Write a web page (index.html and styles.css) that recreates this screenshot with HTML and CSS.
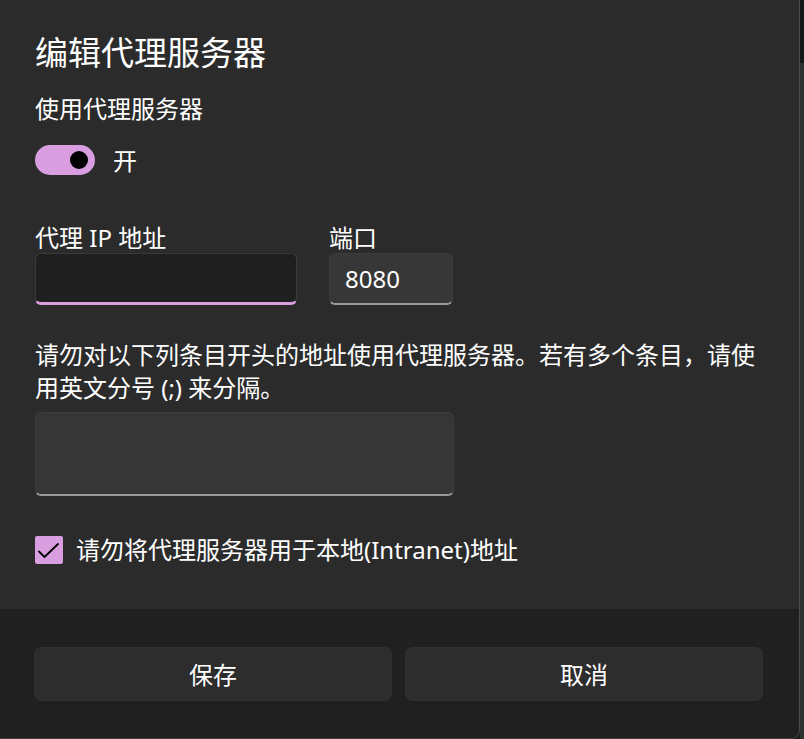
FILE: index.html
```html
<!DOCTYPE html>
<html lang="zh-CN">
<head>
<meta charset="utf-8">
<title>编辑代理服务器</title>
<link rel="stylesheet" href="styles.css">
</head>
<body>
<div class="page">
  <div class="dialog">
    <div class="content">
      <h1 class="title">编辑代理服务器</h1>
      <div class="label use-label">使用代理服务器</div>
      <div class="toggle-row">
        <span class="toggle"><span class="knob"></span></span>
        <span class="toggle-text">开</span>
      </div>
      <div class="fields">
        <div class="field ip">
          <div class="label field-label">代理 IP 地址</div>
          <div class="input input-focused"></div>
        </div>
        <div class="field port">
          <div class="label field-label">端口</div>
          <div class="input input-filled">8080</div>
        </div>
      </div>
      <p class="desc">请勿对以下列条目开头的地址使用代理服务器。若有多个条目，请使用英文分号 (;) 来分隔。</p>
      <div class="textarea"></div>
      <div class="check-row">
        <span class="checkbox">
          <svg width="28" height="28" viewBox="0 0 28 28"><polyline points="4,15.5 9.5,21 23,8" fill="none" stroke="#000" stroke-width="1.8" stroke-linecap="round" stroke-linejoin="round"/></svg>
        </span>
        <span class="check-text">请勿将代理服务器用于本地(Intranet)地址</span>
      </div>
    </div>
    <div class="footer">
      <button class="btn">保存</button>
      <button class="btn">取消</button>
    </div>
  </div>
  <div class="backdrop"><div class="backdrop-top"></div></div>
</div>
</body>
</html>
```
FILE: styles.css
```css
* { box-sizing: border-box; }
html, body {
  margin: 0;
  padding: 0;
  background: #1c201f;
}
body {
  font-family: "Noto Sans", "Noto Sans CJK SC", sans-serif;
  color: #ffffff;
}
.page {
  display: flex;
  width: 804px;
  height: 739px;
  overflow: hidden;
}
.dialog {
  width: 800px;
  height: 739px;
  flex: none;
  display: flex;
  flex-direction: column;
  background: #2b2b2b;
  border-right: 1px solid #4a4d4c;
  border-bottom: 1px solid #3e4241;
  border-bottom-right-radius: 9px;
  overflow: hidden;
}
.backdrop {
  flex: 1;
  background: #2e3231;
}
.backdrop-top {
  height: 63px;
  background: #141816;
}
.content {
  flex: 1;
  padding: 33px 0 0 35px;
}
.title {
  margin: 0;
  font-size: 33px;
  font-weight: 400;
  line-height: 40px;
  height: 40px;
  letter-spacing: 0;
}
.label {
  font-size: 24px;
  line-height: 32px;
}
.use-label {
  margin-top: 20px;
}
.toggle-row {
  margin-top: 20px;
  height: 30px;
  display: flex;
  align-items: center;
}
.toggle {
  width: 60px;
  height: 30px;
  border-radius: 15px;
  background: #d99ee0;
  display: flex;
  align-items: center;
  justify-content: flex-end;
  padding-right: 7px;
}
.knob {
  width: 18px;
  height: 18px;
  border-radius: 50%;
  background: #000;
}
.toggle-text {
  margin-left: 18px;
  font-size: 24px;
  line-height: 30px;
  padding-top: 2px;
}
.fields {
  margin-top: 48px;
  display: flex;
  gap: 32px;
}
.field-label {
  line-height: 30px;
  height: 30px;
}
.ip .input { width: 262px; }
.port .input { width: 124px; }
.input {
  height: 52px;
  border-radius: 6px;
  font-size: 24px;
  line-height: 50px;
  padding-left: 15px;
}
.input-focused {
  background: #1f1f1f;
  border: 1px solid #3a3a3a;
  border-bottom: 3px solid #d99ee0;
}
.input-filled {
  background: #373737;
  border: 1px solid #3d3d3d;
  border-bottom: 2px solid #9a9a9a;
}
.desc {
  margin: 33px 0 0;
  width: 740px;
  font-size: 24px;
  line-height: 33px;
}
.textarea {
  margin-top: 8px;
  width: 419px;
  height: 84px;
  border-radius: 6px;
  background: #363636;
  border: 1px solid #3d3d3d;
  border-bottom: 2px solid #9a9a9a;
}
.check-row {
  margin-top: 40px;
  display: flex;
  align-items: center;
  height: 28px;
}
.checkbox {
  width: 28px;
  height: 28px;
  background: #d99ee0;
  border-radius: 2px;
  display: block;
}
.checkbox svg { display: block; }
.check-text {
  margin-left: 13px;
  font-size: 24px;
  line-height: 32px;
}
.footer {
  height: 129px;
  flex: none;
  background: #202020;
  display: flex;
  gap: 13px;
  padding: 38px 36px 0 34px;
}
.btn {
  width: 358px;
  height: 54px;
  background: #2d2d2d;
  border: 1px solid #303030;
  border-radius: 7px;
  color: #ffffff;
  font-family: "Noto Sans", "Noto Sans CJK SC", sans-serif;
  font-size: 24px;
  line-height: 54px;
  padding: 0;
}
```
